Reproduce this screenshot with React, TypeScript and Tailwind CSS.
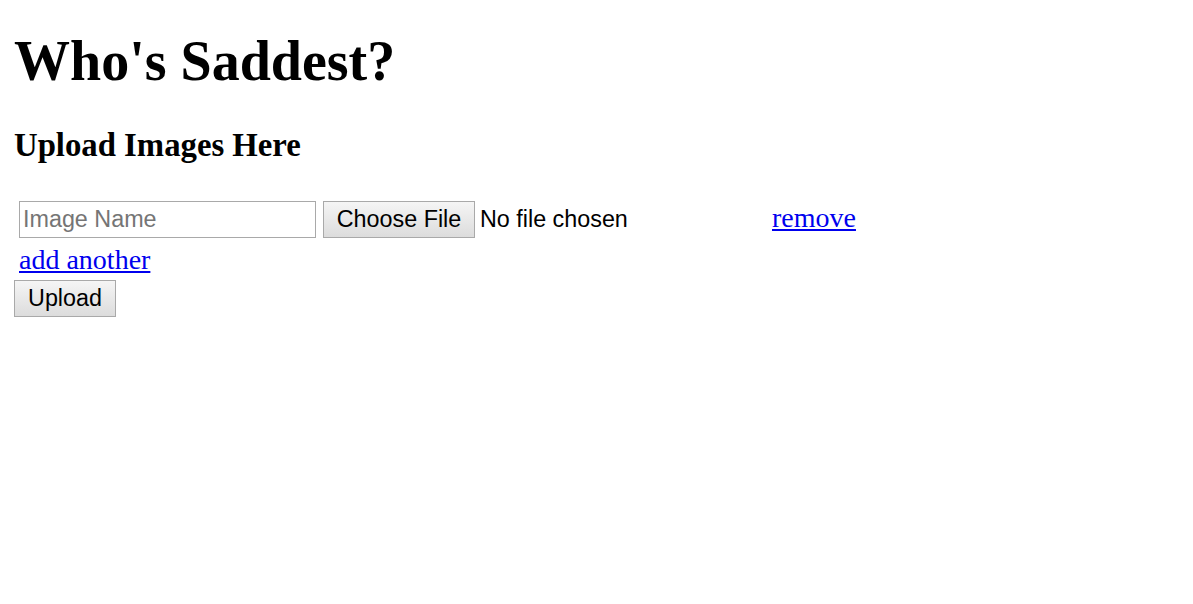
import React from "react";

export default function App() {
  return (
    <div className="min-h-[604px] bg-white pl-[14px] pt-[30px] text-black font-['Liberation_Serif',serif]">
      <h1 className="m-0 text-[56px] font-bold leading-[62px]">Who's Saddest?</h1>
      <h3 className="m-0 mt-[35px] text-[32.76px] font-bold leading-[36px]">Upload Images Here</h3>

      <div className="mt-[38px] pl-[5px]">
        <div className="flex items-center">
          <input
            type="text"
            placeholder="Image Name"
            className="box-border h-[37px] w-[297px] border border-[#a9a9a9] bg-white px-[3px] text-[23.33px] leading-none text-black outline-none placeholder:text-[#757575] font-['Liberation_Sans',sans-serif]"
          />
          <div className="ml-[7px] flex w-[442px] items-center font-['Liberation_Sans',sans-serif] text-[23.33px]">
            <button className="box-border h-[37px] w-[152px] border border-[#a9a9a9] bg-[linear-gradient(#f5f5f5,#dcdcdc)] text-[23.33px] leading-none text-black">
              Choose File
            </button>
            <span className="ml-[5px] leading-none">No file chosen</span>
          </div>
          <a href="#" className="mb-[4px] ml-[7px] text-[28px] leading-[31px] text-[#0000ee] underline">
            remove
          </a>
        </div>
        <div className="mt-[6px] h-[36px]">
          <a href="#" className="text-[28px] leading-[31px] text-[#0000ee] underline">
            add another
          </a>
        </div>
      </div>

      <button className="box-border h-[37px] w-[102px] border border-[#a9a9a9] bg-[linear-gradient(#f5f5f5,#dcdcdc)] text-[23.33px] leading-none text-black font-['Liberation_Sans',sans-serif]">
        Upload
      </button>
    </div>
  );
}
